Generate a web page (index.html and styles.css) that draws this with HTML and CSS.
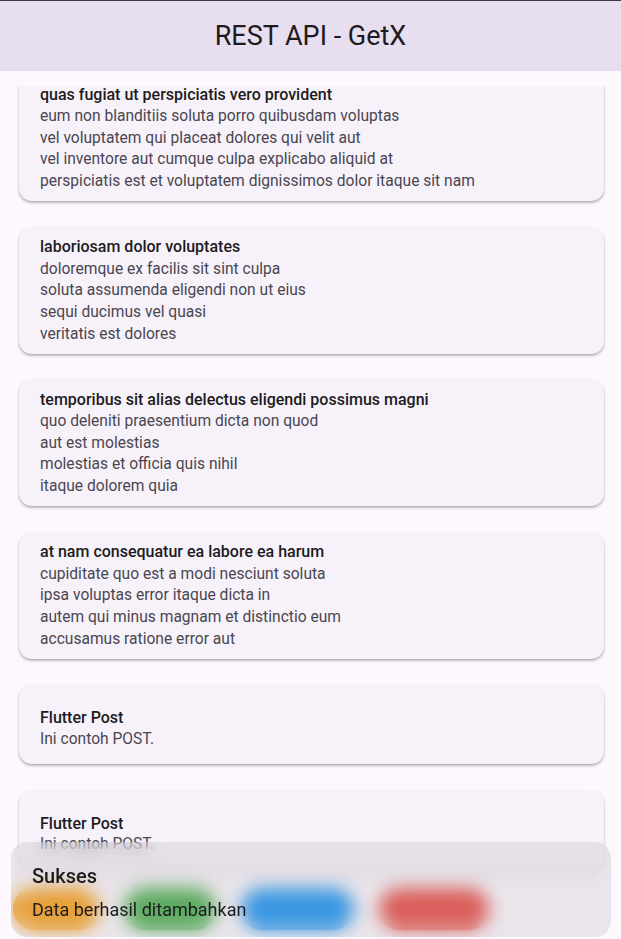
FILE: index.html
```html
<!DOCTYPE html>
<html lang="id">
<head>
<meta charset="utf-8">
<title>REST API - GetX</title>
<link rel="stylesheet" href="styles.css">
</head>
<body>
<div class="screen">
  <header class="appbar"><h1 class="appbar-title">REST API - GetX</h1></header>
  <main class="list-wrap">
    <div class="list-viewport">
      <div class="list">
        <article class="card card-long">
          <h2 class="card-title">quas fugiat ut perspiciatis vero provident</h2>
          <p class="card-body">eum non blanditiis soluta porro quibusdam voluptas<br>vel voluptatem qui placeat dolores qui velit aut<br>vel inventore aut cumque culpa explicabo aliquid at<br>perspiciatis est et voluptatem dignissimos dolor itaque sit nam</p>
        </article>
        <article class="card card-long">
          <h2 class="card-title">laboriosam dolor voluptates</h2>
          <p class="card-body">doloremque ex facilis sit sint culpa<br>soluta assumenda eligendi non ut eius<br>sequi ducimus vel quasi<br>veritatis est dolores</p>
        </article>
        <article class="card card-long">
          <h2 class="card-title">temporibus sit alias delectus eligendi possimus magni</h2>
          <p class="card-body">quo deleniti praesentium dicta non quod<br>aut est molestias<br>molestias et officia quis nihil<br>itaque dolorem quia</p>
        </article>
        <article class="card card-long">
          <h2 class="card-title">at nam consequatur ea labore ea harum</h2>
          <p class="card-body">cupiditate quo est a modi nesciunt soluta<br>ipsa voluptas error itaque dicta in<br>autem qui minus magnam et distinctio eum<br>accusamus ratione error aut</p>
        </article>
        <article class="card card-short">
          <h2 class="card-title">Flutter Post</h2>
          <p class="card-body">Ini contoh POST.</p>
        </article>
        <article class="card card-short">
          <h2 class="card-title">Flutter Post</h2>
          <p class="card-body">Ini contoh POST.</p>
        </article>
      </div>
    </div>
  </main>
  <nav class="actions">
    <button class="btn btn-orange" type="button"></button>
    <button class="btn btn-green" type="button"></button>
    <button class="btn btn-blue" type="button"></button>
    <button class="btn btn-red" type="button"></button>
  </nav>
  <div class="snackbar" role="status">
    <div class="snack-title">Sukses</div>
    <div class="snack-message">Data berhasil ditambahkan</div>
  </div>
</div>
</body>
</html>
```

FILE: styles.css
```css
* { box-sizing: border-box; }
html, body { margin: 0; padding: 0; }
body {
  background: #fdf7fe;
  font-family: Roboto, "Liberation Sans", sans-serif;
  width: 621px;
  height: 939px;
  overflow: hidden;
}
.screen {
  position: relative;
  width: 621px;
  height: 939px;
  display: flex;
  flex-direction: column;
  border-top: 1px solid #3b3b3d;
  overflow: hidden;
}
.appbar {
  flex: 0 0 70px;
  background: #e7dff0;
  display: flex;
  align-items: center;
  justify-content: center;
}
.appbar-title {
  margin: 0;
  font-size: 27px;
  font-weight: 400;
  color: #1d1b20;
  letter-spacing: 0;
}
.list-wrap {
  flex: 1 1 auto;
  padding-top: 15px;
  display: flex;
  flex-direction: column;
  min-height: 0;
}
.list-viewport {
  flex: 1 1 auto;
  overflow: hidden;
  min-height: 0;
}
.list {
  margin-top: -12px;
  display: flex;
  flex-direction: column;
  gap: 25.5px;
  padding-bottom: 20px;
}
.card {
  margin: 0 17px 0 19px;
  background: #f7f2fa;
  border-radius: 13px;
  box-shadow: 0 2px 3px rgba(0,0,0,0.22), 0 1px 2px rgba(0,0,0,0.12);
  padding-left: 21px;
  padding-right: 21px;
}
.card-long { height: 127px; padding-top: 9.5px; }
.card-short { height: 80px; padding-top: 23px; }
.card-title {
  margin: 0;
  font-size: 16px;
  line-height: 22.75px;
  font-weight: 500;
  color: #1d1b20;
}
.card-body {
  margin: 0;
  font-size: 15.6px;
  line-height: 21.6px;
  font-weight: 400;
  color: #4a4650;
}
.card-short .card-title { line-height: 21.75px; }
.actions {
  flex: 0 0 61px;
  display: flex;
  align-items: flex-start;
  gap: 25px;
  padding: 10px 0 0 13px;
}
.btn {
  height: 42px;
  border: none;
  border-radius: 21px;
  padding: 0;
}
.btn-orange { width: 86px; background: #f9a01c; }
.btn-green { width: 92px; background: #4cae50; }
.btn-blue { width: 113px; background: #2196f3; }
.btn-red { width: 110px; background: #e84f4a; }
.snackbar {
  position: absolute;
  left: 11px;
  right: 10px;
  top: 841px;
  bottom: 2px;
  border-radius: 16px;
  background: rgba(158, 158, 158, 0.2);
  backdrop-filter: blur(9px);
  -webkit-backdrop-filter: blur(9px);
  padding: 20px 21px 0 21px;
}
.snack-title {
  font-size: 20px;
  line-height: 28px;
  font-weight: 500;
  color: #1d1b20;
}
.snack-message {
  margin-top: 8px;
  font-size: 18px;
  line-height: 24px;
  color: #1d1b20;
}
```
